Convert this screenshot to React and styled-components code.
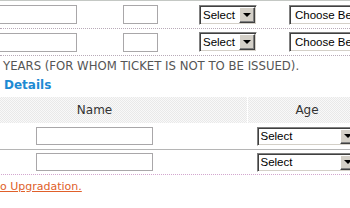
import React from "react";
import styled, { createGlobalStyle } from "styled-components";

const GlobalStyle = createGlobalStyle`
  html, body {
    margin: 0;
    padding: 0;
    background: #fff;
    overflow: hidden;
  }
  body {
    width: 350px;
    height: 208px;
    font-family: "DejaVu Sans", Verdana, sans-serif;
  }
`;

const Page = styled.div`
  width: 350px;
  overflow: hidden;
`;

// top table with the passenger rows
const TopTable = styled.div`
  border-top: 1px solid #c4c8c4;
`;

const TopRow = styled.div`
  display: flex;
  align-items: center;
  height: ${(p) => p.h}px;
  border-bottom: 1px dotted #b8aab8;
`;

const TextBox = styled.div`
  box-sizing: border-box;
  flex: none;
  width: ${(p) => p.w}px;
  height: ${(p) => p.h || 19}px;
  margin-left: ${(p) => p.ml || 0}px;
  border: 1px solid #a9a7a9;
  background: #fff;
`;

const Dropdown = styled.div`
  box-sizing: border-box;
  flex: none;
  display: flex;
  align-items: stretch;
  width: ${(p) => p.w}px;
  height: ${(p) => p.h || 20}px;
  margin-left: ${(p) => p.ml || 0}px;
  background: #fff;
  border-top: 1px solid #808080;
  border-left: 1px solid #808080;
  border-right: 1px solid #fff;
  border-bottom: 1px solid #fff;
  box-shadow: inset 1px 1px 0 #404040, inset -1px -1px 0 #d4d0c8;
  padding: 1px;
  font-family: "Liberation Sans", Arial, sans-serif;
  font-size: 11.5px;
  color: #000;
`;

const DropLabel = styled.span`
  flex: 1;
  overflow: hidden;
  white-space: nowrap;
  padding-left: ${(p) => p.pl || 2}px;
  line-height: ${(p) => p.lh || 16}px;
`;

const DropButton = styled.span`
  box-sizing: border-box;
  flex: none;
  width: 16px;
  display: flex;
  align-items: center;
  justify-content: center;
  background: #d4d0c8;
  border-top: 1px solid #fff;
  border-left: 1px solid #fff;
  border-right: 1px solid #404040;
  border-bottom: 1px solid #404040;
  box-shadow: inset -1px -1px 0 #808080;

  &::after {
    content: "";
    width: 0;
    height: 0;
    border-left: 4px solid transparent;
    border-right: 4px solid transparent;
    border-top: 4px solid #000;
  }
`;

const Select = ({ label, w, h, ml, lh, pl }) => (
  <Dropdown w={w} h={h} ml={ml}>
    <DropLabel lh={lh} pl={pl}>{label}</DropLabel>
    <DropButton />
  </Dropdown>
);

const Note = styled.div`
  padding: 3px 0 0 3px;
  font-size: 11.7px;
  line-height: 14px;
  color: #555;
  white-space: nowrap;
`;

const Heading = styled.div`
  padding: 4px 0 0 4px;
  font-size: 12px;
  line-height: 16px;
  font-weight: bold;
  color: #1d8ad3;
`;

const Grid = styled.div`
  margin-top: 4px;
  margin-left: -58px;
  width: 424px;
`;

const HeadRow = styled.div`
  display: flex;
  gap: 1px;
  height: 26px;
`;

const HeadCell = styled.div`
  flex: none;
  width: ${(p) => p.w}px;
  display: flex;
  align-items: center;
  justify-content: center;
  font-size: 12px;
  color: #333;
  background: repeating-conic-gradient(#e9e9e9 0 25%, #f9f9f9 0 50%) 0 0 / 2px 2px;
`;

const BodyRow = styled.div`
  display: flex;
  gap: 1px;
  height: ${(p) => (p.last ? 24 : 26)}px;
  border-bottom: 1px ${(p) => (p.last ? "dotted #d3a6cf" : "solid #b5b5b5")};
`;

const BodyCell = styled.div`
  flex: none;
  width: ${(p) => p.w}px;
  display: flex;
  align-items: center;
  justify-content: center;
`;

const Link = styled.a`
  display: inline-block;
  margin-top: 5px;
  font-size: 11px;
  line-height: 14px;
  color: #e0602a;
  text-decoration: underline;
  white-space: nowrap;
`;

const passengers = [1, 2];

export default function App() {
  return (
    <Page>
      <GlobalStyle />
      <TopTable>
        {passengers.map((n) => (
          <TopRow key={n} h={n === 1 ? 27 : 26}>
            <TextBox w={100} ml={-23} />
            <TextBox w={35} ml={46} />
            <Select label="Select" w={58} ml={41} />
            <Select label="Choose Berth Preference" w={100} ml={32} pl={4} />
          </TopRow>
        ))}
      </TopTable>
      <Note>YEARS (FOR WHOM TICKET IS NOT TO BE ISSUED).</Note>
      <Heading>Details</Heading>
      <Grid>
        <HeadRow>
          <HeadCell w={305}>Name</HeadCell>
          <HeadCell w={118}>Age</HeadCell>
        </HeadRow>
        {passengers.map((n) => (
          <BodyRow key={n} last={n === passengers.length}>
            <BodyCell w={305}>
              <TextBox w={117} h={18} />
            </BodyCell>
            <BodyCell w={118}>
              <Select label="Select" w={101} h={19} lh={15} />
            </BodyCell>
          </BodyRow>
        ))}
      </Grid>
      <Link href="#">o Upgradation.</Link>
    </Page>
  );
}
